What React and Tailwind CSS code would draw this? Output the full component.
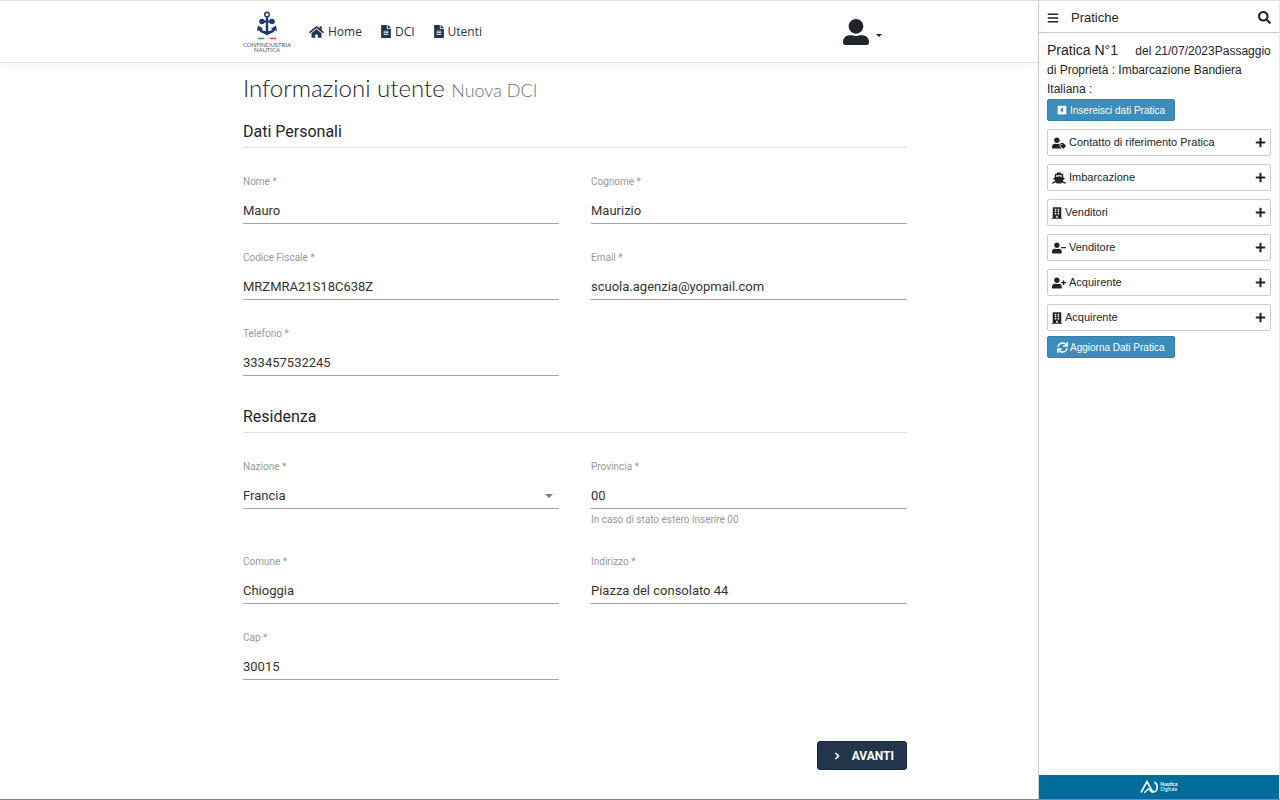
import { useState } from "react";
import {
    FaBars,
    FaBuilding,
    FaCaretSquareLeft,
    FaFileAlt,
    FaHome,
    FaPlus,
    FaSearch,
    FaShip,
    FaSync,
    FaUserAlt,
    FaUserMinus,
    FaUserPlus,
    FaUserTag,
} from "react-icons/fa";

const navLinks = [
    { label: "Home", icon: FaHome, iconClass: "w-[15px] h-[14px]" },
    { label: "DCI", icon: FaFileAlt, iconClass: "w-[10px] h-[13px]" },
    { label: "Utenti", icon: FaFileAlt, iconClass: "w-[10px] h-[13px]" },
];

const panels = [
    { id: "contatto", label: "Contatto di riferimento Pratica", icon: FaUserTag, iconClass: "w-[14px]" },
    { id: "imbarcazione", label: "Imbarcazione", icon: FaShip, iconClass: "w-[14px]" },
    { id: "venditori", label: "Venditori", icon: FaBuilding, iconClass: "w-[10px]" },
    { id: "venditore", label: "Venditore", icon: FaUserMinus, iconClass: "w-[14px]" },
    { id: "acquirente", label: "Acquirente", icon: FaUserPlus, iconClass: "w-[14px]" },
    { id: "acquirente-soc", label: "Acquirente", icon: FaBuilding, iconClass: "w-[10px]" },
];

function Logo() {
    return (
        <a href="#" className="flex w-12 flex-col items-center gap-px text-[#1f3a6e]">
            <svg viewBox="0 0 24 30" className="h-[30px] w-6" fill="none" stroke="currentColor">
                <circle cx="12" cy="3.500" r="2.300" strokeWidth="1.400" />
                <path d="M12 6V22" strokeWidth="2.400" />
                <path d="M7 10.500h10" strokeWidth="2" />
                <circle cx="7" cy="10.500" r="2.800" fill="currentColor" stroke="none" />
                <circle cx="17" cy="10.500" r="2.800" fill="currentColor" stroke="none" />
                <path d="M4.600 17c.8 3.400 3.600 4.600 7.400 4.600s6.600-1.200 7.400-4.600" strokeWidth="2.800" />
                <path d="M2 20L3 14.500l5.200 3.200zM22 20l-1-5.500-5.200 3.200zM8.500 22h7L12 24.500z" fill="currentColor" stroke="none" />
                <path d="M3 27.500h6" stroke="#3fa374" strokeWidth="1.600" />
                <path d="M9 27.500h6" stroke="#e3e6ea" strokeWidth="1.600" />
                <path d="M15 27.500h6" stroke="#e0525c" strokeWidth="1.600" />
            </svg>
            <span className="text-center font-['Lato'] text-[6px] leading-[5px] text-[#4a5a80]">
                CONFINDUSTRIA
                <br />
                NAUTICA
            </span>
        </a>
    );
}

function Field({ label, name, value, onChange, hint, type = "text" }) {
    return (
        <div>
            <label htmlFor={name} className="block text-[10px] leading-4 text-[#999]">{label} *</label>
            <input
                id={name}
                name={name}
                type={type}
                value={value}
                onChange={onChange}
                className="mt-2 block h-[26px] w-full border-b border-[#a6a6a6] bg-transparent text-[13px] text-[#333] focus:outline-none"
            />
            {hint && <p className="mt-[3px] text-[10px] leading-4 text-[#999]">{hint}</p>}
        </div>
    );
}

function SectionTitle({ children }) {
    return (
        <h2 className="mb-[26px] border-b border-[#e0e0e0] pb-[3px] text-base leading-6 text-[#212529]">{children}</h2>
    );
}

function Header() {
    return (
        <header className="flex h-[63px] items-center border-y border-[#e0e0e0] pr-[156px] pl-[243px] shadow-[0_2px_8px_rgba(0,0,0,0.06)]">
            <Logo />
            <nav className="ml-[18px] flex gap-[19px] font-['Open_Sans'] text-[12px] text-[#22354b]">
                {navLinks.map(({ label, icon: Icon, iconClass }) => (
                    <a key={label} href="#" className="flex items-center gap-1">
                        <Icon className={iconClass} />
                        {label}
                    </a>
                ))}
            </nav>
            <button type="button" aria-label="Account" className="ml-auto flex items-center gap-[7px] text-[#212529]">
                <FaUserAlt className="size-[26px]" />
                <span className="mt-2 border-x-3 border-t-3 border-x-transparent border-t-current" />
            </button>
        </header>
    );
}

function Sidebar() {
    return (
        <aside className="flex w-[242px] shrink-0 flex-col border-t border-r border-l border-t-[#e0e0e0] border-r-[#e8e8e8] border-l-[#ccc] font-['Liberation_Sans'] text-[12px] text-[#212529]">
            <div className="flex h-8 items-center border-b border-[#ccc] pt-[2px] pr-2 pl-2">
                <button type="button" aria-label="Menu"><FaBars className="size-3" /></button>
                <span className="ml-3 text-[13px]">Pratiche</span>
                <button type="button" aria-label="Cerca" className="ml-auto"><FaSearch className="size-[13px]" /></button>
            </div>

            <div className="flex flex-1 flex-col items-start px-2 pt-2">
                <p className="leading-[19px]">
                    <span className="mr-[14px] text-[14px]">Pratica N°1</span>{" "}
                    del 21/07/2023Passaggio di Proprietà : Imbarcazione Bandiera Italiana :
                </p>
                <button type="button" className="flex h-[22px] items-center gap-[3px] rounded-xs border border-[#367fa9] bg-[#3c8dbc] px-[9px] text-[10px] font-medium text-white">
                    <FaCaretSquareLeft className="size-[10px]" />
                    Insereisci dati Pratica
                </button>

                <div className="mt-2 flex w-full flex-col gap-2">
                    {panels.map(({ id, label, icon: Icon, iconClass }) => (
                        <button key={id} type="button" className="flex h-[27px] items-center gap-[3px] rounded-xs border border-[#ccc] px-1 text-[11px]">
                            <Icon className={`h-3 ${iconClass}`} />
                            {label}
                            <FaPlus className="ml-auto size-[11px]" />
                        </button>
                    ))}
                </div>

                <button type="button" className="mt-[5px] flex h-[22px] items-center gap-[2px] rounded-xs border border-[#367fa9] bg-[#3c8dbc] px-[9px] text-[10px] font-medium text-white">
                    <FaSync className="size-[11px]" />
                    Aggiorna Dati Pratica
                </button>
            </div>

            <footer className="flex h-6 items-center justify-center gap-[2px] bg-[#006c9b] text-white">
                <svg viewBox="0 0 18 14" className="h-[14px] w-[18px]" fill="none" stroke="currentColor" strokeWidth="1.600">
                    <path d="M1 12.500L7 1.500l3.500 6.500c1.500 4 4.500 5 6 2 1.200-2.800.6-6-2-8" />
                    <path d="M4 12.500c2.500 0 3-3.500 4.500-3.500s2 3.500 5 3.200" strokeWidth="1.400" />
                </svg>
                <span className="font-['Lato'] text-[5px] leading-[5px]">
                    <b>Nautica</b>
                    <br />
                    Digitale
                </span>
            </footer>
        </aside>
    );
}

export default function App() {
    const [formData, setFormData] = useState({
        nome: "Mauro",
        cognome: "Maurizio",
        codiceFiscale: "MRZMRA21S18C638Z",
        email: "scuola.agenzia@yopmail.com",
        telefono: "333457532245",
        nazione: "Francia",
        provincia: "00",
        comune: "Chioggia",
        indirizzo: "Piazza del consolato 44",
        cap: "30015",
    });

    const handleChange = (e) => {
        const { name, value } = e.target;
        setFormData(prev => ({ ...prev, [name]: value }));
    };

    return (
        <div className="flex min-h-screen border-b border-[#888] bg-white font-['Roboto',sans-serif]">
            <div className="min-w-0 flex-1">
                <Header />

                <main className="pt-[9px] pr-[131px] pb-[29px] pl-[243px]">
                    <h1 className="mb-[14px] font-['Lato'] text-[24px] leading-8 font-light text-[#212529]">
                        Informazioni utente <small className="text-[18px] text-[#6c757d]">Nuova DCI</small>
                    </h1>

                    <form onSubmit={(e) => e.preventDefault()}>
                        {/* Dati Personali */}
                        <SectionTitle>Dati Personali</SectionTitle>
                        <div className="grid grid-cols-2 gap-x-8 gap-y-[26px]">
                            <Field label="Nome" name="nome" value={formData.nome} onChange={handleChange} />
                            <Field label="Cognome" name="cognome" value={formData.cognome} onChange={handleChange} />
                            <Field label="Codice Fiscale" name="codiceFiscale" value={formData.codiceFiscale} onChange={handleChange} />
                            <Field label="Email" name="email" type="email" value={formData.email} onChange={handleChange} />
                            <Field label="Telefono" name="telefono" type="tel" value={formData.telefono} onChange={handleChange} />
                        </div>

                        {/* Residenza */}
                        <div className="mt-[29px]">
                            <SectionTitle>Residenza</SectionTitle>
                        </div>
                        <div className="grid grid-cols-2 gap-x-8 gap-y-[26px]">
                            <div>
                                <label htmlFor="nazione" className="block text-[10px] leading-4 text-[#999]">Nazione *</label>
                                <div className="relative mt-2">
                                    <select
                                        id="nazione"
                                        name="nazione"
                                        value={formData.nazione}
                                        onChange={handleChange}
                                        className="block h-[26px] w-full appearance-none border-b border-[#a6a6a6] bg-transparent text-[13px] text-[#333] focus:outline-none"
                                    >
                                        <option value="Francia">Francia</option>
                                        <option value="Italia">Italia</option>
                                    </select>
                                    <span className="pointer-events-none absolute top-[11px] right-[6px] border-x-4 border-t-4 border-x-transparent border-t-[#808080]" />
                                </div>
                            </div>
                            <Field label="Provincia" name="provincia" value={formData.provincia} onChange={handleChange} hint="In caso di stato estero inserire 00" />
                            <Field label="Comune" name="comune" value={formData.comune} onChange={handleChange} />
                            <Field label="Indirizzo" name="indirizzo" value={formData.indirizzo} onChange={handleChange} />
                            <Field label="Cap" name="cap" value={formData.cap} onChange={handleChange} />
                        </div>

                        {/* Submit */}
                        <div className="mt-[61px] flex justify-end">
                            <button type="submit" className="flex h-[29px] items-center gap-2 rounded-[3px] border border-[#14243a] bg-[#22354b] px-3 text-[12px] font-bold text-white">
                                <svg viewBox="0 0 14 14" className="size-[14px]" fill="none" stroke="currentColor" strokeWidth="1.600">
                                    <path d="M5.500 4l3 3-3 3" />
                                </svg>
                                AVANTI
                            </button>
                        </div>
                    </form>
                </main>
            </div>

            <Sidebar />
        </div>
    );
}
